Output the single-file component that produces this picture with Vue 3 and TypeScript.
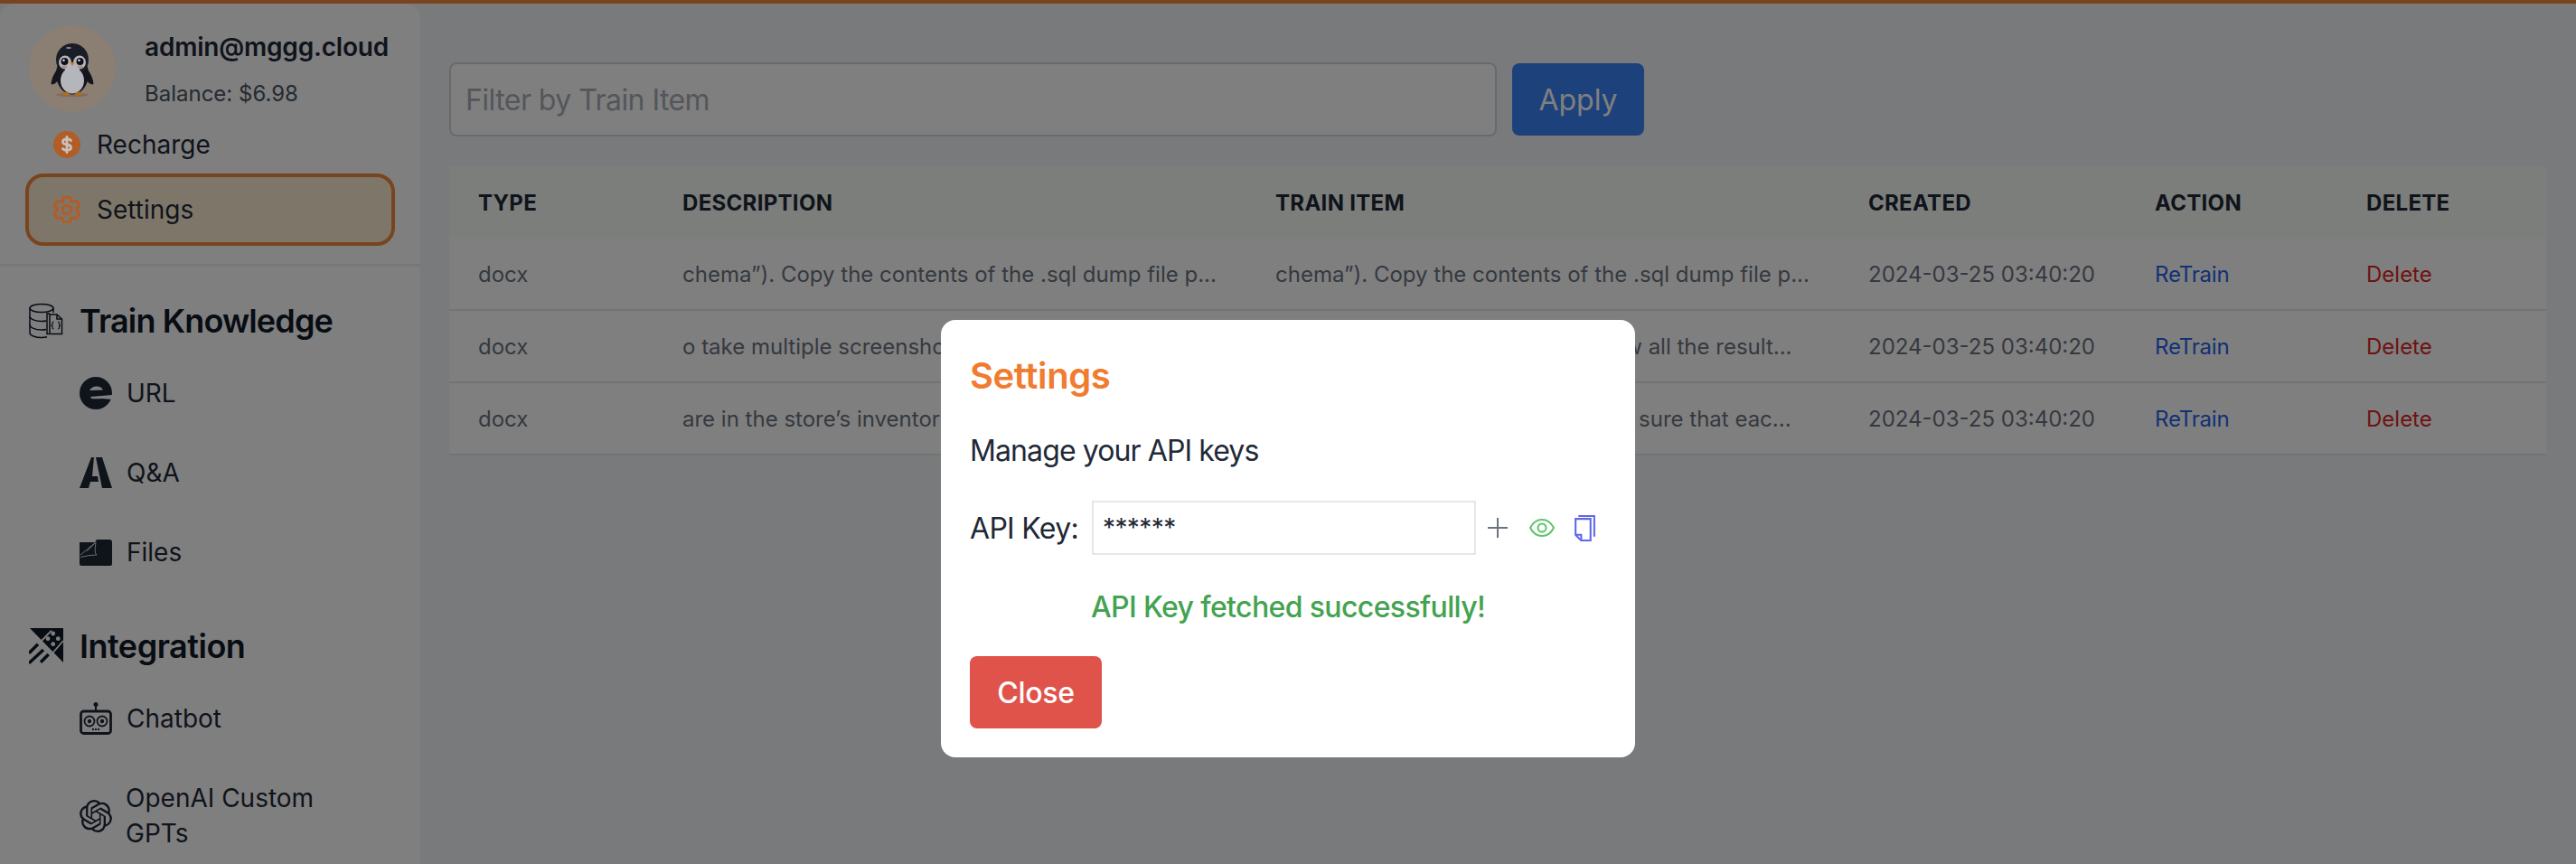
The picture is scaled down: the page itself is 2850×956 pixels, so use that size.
<script setup lang="ts">
interface TrainRow {
  type: string
  description: string
  trainItem: string
  created: string
}

const navTrain = ['URL', 'Q&A', 'Files']

const rows: TrainRow[] = [
  {
    type: 'docx',
    description: 'chema”). Copy the contents of the .sql dump file p...',
    trainItem: 'chema”). Copy the contents of the .sql dump file p...',
    created: '2024-03-25 03:40:20',
  },
  {
    type: 'docx',
    description: 'o take multiple screenshots, to view all the result...',
    trainItem: 'o take multiple screenshots, to view all the result...',
    created: '2024-03-25 03:40:20',
  },
  {
    type: 'docx',
    description: 'are in the store’s inventory to make sure that eac...',
    trainItem: 'are in the store’s inventory to make sure that eac...',
    created: '2024-03-25 03:40:20',
  },
]
</script>

<template>
  <div class="app">
    <div class="top-bar"></div>
    <div class="content">
      <aside class="sidebar">
        <div class="user">
          <svg class="avatar lifted" viewBox="0 0 96 96">
            <circle cx="48" cy="48" r="48" fill="#8b7f73" />
            <ellipse cx="48" cy="77" rx="18" ry="2" fill="#86695c" />
            <path d="M31 49 Q25 57 24.500 65 Q28 67 33 60Z" fill="#14161d" />
            <path d="M65 49 Q71 57 71.500 65 Q68 67 63 60Z" fill="#14161d" />
            <ellipse cx="48" cy="54" rx="18" ry="22.500" fill="#14161d" />
            <ellipse cx="48" cy="38" rx="18" ry="18" fill="#1a1d26" />
            <ellipse cx="48" cy="61" rx="13" ry="14.500" fill="#b5b6bc" />
            <ellipse cx="40" cy="41" rx="7" ry="7.500" fill="#b5b6bc" />
            <ellipse cx="56" cy="41" rx="7" ry="7.500" fill="#b5b6bc" />
            <rect x="40" y="42" width="16" height="10" fill="#b5b6bc" />
            <circle cx="39.500" cy="40" r="4" fill="#0e1016" />
            <circle cx="56.500" cy="40" r="4" fill="#0e1016" />
            <circle cx="38.500" cy="38.800" r="1.300" fill="#d8d8da" />
            <circle cx="55.500" cy="38.800" r="1.300" fill="#d8d8da" />
            <path d="M45 41 H51 L48 45Z" fill="#c7812f" />
            <ellipse cx="39" cy="46" rx="3" ry="1.800" fill="#b08d86" />
            <ellipse cx="57" cy="46" rx="3" ry="1.800" fill="#b08d86" />
            <ellipse cx="41" cy="75.500" rx="4" ry="2" fill="#a96f1e" />
            <ellipse cx="55" cy="75.500" rx="4" ry="2" fill="#a96f1e" />
            <ellipse cx="44" cy="25" rx="3" ry="1" fill="#8a8d95" />
          </svg>
          <div class="user-text">
            <div class="email">admin@mggg.cloud</div>
            <div class="balance">Balance: $6.98</div>
          </div>
        </div>

        <div class="account-link recharge">
          <svg class="account-icon lifted" viewBox="0 0 30 30">
            <circle cx="15" cy="15" r="15" fill="#b25c26" />
            <path
              d="M19.500 10.500 Q18.500 8.800 15 8.800 Q10.500 8.800 10.500 11.800 Q10.500 14.500 15 15 Q19.500 15.500 19.500 18.200 Q19.500 21.200 15 21.200 Q11.500 21.200 10.500 19.500 M15 6.300 V23.700"
              fill="none"
              stroke="#c9c2bb"
              stroke-width="2.800"
              stroke-linecap="round"
            />
          </svg>
          <span>Recharge</span>
        </div>

        <div class="account-link active">
          <svg class="account-icon lifted" viewBox="2.500 2.500 19 19" fill="none" stroke="#b25c26" stroke-width="1.900">
            <path
              stroke-linecap="round"
              stroke-linejoin="round"
              d="M9.594 3.94c.09-.542.56-.94 1.11-.94h2.593c.55 0 1.02.398 1.11.94l.213 1.281c.063.374.313.686.645.87.074.04.147.083.22.127.325.196.72.257 1.075.124l1.217-.456a1.125 1.125 0 0 1 1.37.49l1.296 2.247a1.125 1.125 0 0 1-.26 1.431l-1.003.827c-.293.241-.438.613-.43.992a7.723 7.723 0 0 1 0 .255c-.008.378.137.75.43.991l1.004.827c.424.35.534.955.26 1.43l-1.298 2.247a1.125 1.125 0 0 1-1.369.491l-1.217-.456c-.355-.133-.75-.072-1.076.124a6.47 6.47 0 0 1-.22.128c-.331.183-.581.495-.644.869l-.213 1.281c-.09.543-.56.94-1.11.94h-2.594c-.55 0-1.019-.398-1.11-.94l-.213-1.281c-.062-.374-.312-.686-.644-.87a6.52 6.52 0 0 1-.22-.127c-.325-.196-.72-.257-1.076-.124l-1.217.456a1.125 1.125 0 0 1-1.369-.49l-1.297-2.247a1.125 1.125 0 0 1 .26-1.431l1.004-.827c.292-.24.437-.613.43-.991a6.932 6.932 0 0 1 0-.255c.007-.38-.138-.751-.43-.992l-1.004-.827a1.125 1.125 0 0 1-.26-1.43l1.297-2.247a1.125 1.125 0 0 1 1.37-.491l1.216.456c.356.133.751.072 1.076-.124.072-.044.146-.086.22-.128.332-.183.582-.495.644-.869l.214-1.28Z"
            />
            <path stroke-linecap="round" stroke-linejoin="round" d="M15 12a3 3 0 1 1-6 0 3 3 0 0 1 6 0Z" />
          </svg>
          <span>Settings</span>
        </div>

        <div class="divider"></div>

        <div class="section-title train-title">
          <svg class="section-icon" viewBox="0 0 38 40" fill="none" stroke="#111827" stroke-width="1.500">
            <ellipse cx="14" cy="6" rx="13" ry="4.500" />
            <path d="M1 6 V33.500 C1 36 7 38.500 14 38.500 C16.500 38.500 18.500 38.200 20 37.800" />
            <path d="M27 6 V11" />
            <path d="M1 15 C1 18 7 20.500 14 20.500 C16 20.500 18 20.300 19 20" />
            <path d="M1 24.500 C1 27.500 7 30 14 30 C16 30 18 29.800 19 29.500" />
            <path d="M23 12 H20 V34.500 H22" />
            <path d="M23 13 H31 L36.500 18 V34.500 H23Z" fill="#fff" />
            <path d="M31 13 V18 H36.500" />
            <path d="M27.500 21 Q26 21 26 22.500 V24 L25 25 L26 26 V27.500 Q26 29 27.500 29 M32 21 Q33.500 21 33.500 22.500 V24 L34.500 25 L33.500 26 V27.500 Q33.500 29 32 29" stroke-width="1.100" />
          </svg>
          <span class="train-label">Train Knowledge</span>
        </div>

        <div v-for="item in navTrain" :key="item" class="nav-item">
          <svg v-if="item === 'URL'" class="nav-icon" viewBox="0 0 36 36">
            <circle cx="18" cy="18" r="18" fill="#1f2937" />
            <path d="M11 15 Q13.500 10.500 19 10.500 Q24 10.500 26 14.500 Z" fill="#fff" />
            <path d="M12 22 L36 20 V25 L25 24 Q19 24.500 13 24 Z" fill="#fff" />
          </svg>
          <svg v-else-if="item === 'Q&A'" class="nav-icon" viewBox="0 0 36 36">
            <path d="M0 35 L13 1 H16 L14 22 H20 L21 28 H12 L10 35 Z" fill="#1f2937" />
            <path d="M18 1 H25 L36 35 H25 Z" fill="#1f2937" />
          </svg>
          <svg v-else class="nav-icon" viewBox="0 0 36 36">
            <path d="M0 7 H17 L19 4 H33 Q36 4 36 7 V31 Q36 33 33 33 H3 Q0 33 0 31 Z" fill="#1f2937" />
            <path d="M1 21 L18 7 Q16 20 19 21 Q10 21 1 23.500 M8 17 L17 8" fill="none" stroke="#fff" stroke-width="0.800" />
          </svg>
          <span>{{ item }}</span>
        </div>

        <div class="section-title integration-title">
          <svg class="section-icon" viewBox="0 0 38 40">
            <path d="M1 0 H38 V38 Z" fill="#111827" />
            <path d="M12 16 L25 2.700 M25 29 L38 14" stroke="#fff" stroke-width="1.800" />
            <circle cx="26.700" cy="6" r="2.400" fill="#fff" />
            <circle cx="21" cy="11.700" r="2.400" fill="#fff" />
            <circle cx="32.300" cy="11.700" r="2.400" fill="#fff" />
            <circle cx="26.700" cy="17.700" r="2.400" fill="#fff" />
            <path d="M0 27.700 L10 17.700 M0 38.700 L16 24 M13 37.700 L21.700 29" stroke="#111827" stroke-width="3.400" />
          </svg>
          <span class="integration-label">Integration</span>
        </div>

        <div class="nav-item">
          <svg class="nav-icon" viewBox="0 0 36 36" fill="none" stroke="#1f2937">
            <circle cx="18" cy="2.500" r="2.500" fill="#1f2937" stroke="none" />
            <path d="M18 4 V10" stroke-width="2" />
            <rect x="1.500" y="10" width="33" height="24.500" rx="3" stroke-width="2.800" />
            <circle cx="11" cy="21" r="5.500" stroke-width="1.800" />
            <circle cx="25" cy="21" r="5.500" stroke-width="1.800" />
            <circle cx="11" cy="21" r="2.200" fill="#1f2937" stroke="none" />
            <circle cx="25" cy="21" r="2.200" fill="#1f2937" stroke="none" />
            <path d="M14 30 H22" stroke-width="2" stroke-dasharray="2 1" />
          </svg>
          <span>Chatbot</span>
        </div>

        <div class="nav-item gpt-item">
          <svg class="nav-icon" viewBox="0 0 24 24" fill="#1f2937">
            <path d="M22.2819 9.8211a5.9847 5.9847 0 0 0-.5157-4.9108 6.0462 6.0462 0 0 0-6.5098-2.9A6.0651 6.0651 0 0 0 4.9807 4.1818a5.9847 5.9847 0 0 0-3.9977 2.9 6.0462 6.0462 0 0 0 .7427 7.0966 5.98 5.98 0 0 0 .511 4.9107 6.051 6.051 0 0 0 6.5146 2.9001A5.9847 5.9847 0 0 0 13.2599 24a6.0557 6.0557 0 0 0 5.7718-4.2058 5.9894 5.9894 0 0 0 3.9977-2.9001 6.0557 6.0557 0 0 0-.7475-7.0729zm-9.022 12.6081a4.4755 4.4755 0 0 1-2.8764-1.0408l.1419-.0804 4.7783-2.7582a.7948.7948 0 0 0 .3927-.6813v-6.7369l2.02 1.1686a.071.071 0 0 1 .038.052v5.5826a4.504 4.504 0 0 1-4.4945 4.4944zm-9.6607-4.1254a4.4708 4.4708 0 0 1-.5346-3.0137l.142.0852 4.783 2.7582a.7712.7712 0 0 0 .7806 0l5.8428-3.3685v2.3324a.0804.0804 0 0 1-.0332.0615L9.74 19.9502a4.4992 4.4992 0 0 1-6.1408-1.6464zM2.3408 7.8956a4.485 4.485 0 0 1 2.3655-1.9728V11.6a.7664.7664 0 0 0 .3879.6765l5.8144 3.3543-2.0201 1.1685a.0757.0757 0 0 1-.071 0l-4.8303-2.7865A4.504 4.504 0 0 1 2.3408 7.872zm16.5963 3.8558L13.1038 8.364 15.1192 7.2a.0757.0757 0 0 1 .071 0l4.8303 2.7913a4.4944 4.4944 0 0 1-.6765 8.1042v-5.6772a.79.79 0 0 0-.407-.667zm2.0107-3.0231l-.142-.0852-4.7735-2.7818a.7759.7759 0 0 0-.7854 0L9.409 9.2297V6.8974a.0662.0662 0 0 1 .0284-.0615l4.8303-2.7866a4.4992 4.4992 0 0 1 6.6802 4.66zM8.3065 12.863l-2.02-1.1638a.0804.0804 0 0 1-.038-.0567V6.0742a4.4992 4.4992 0 0 1 7.3757-3.4537l-.142.0805L8.704 5.459a.7948.7948 0 0 0-.3927.6813zm1.0976-2.3654l2.602-1.4998 2.6069 1.4998v2.9994l-2.5974 1.4997-2.6067-1.4997Z" />
          </svg>
          <span>OpenAI Custom GPTs</span>
        </div>
      </aside>

      <main class="main">
        <div class="filter">
          <input class="filter-input" type="text" placeholder="Filter by Train Item" />
          <button class="apply-btn">Apply</button>
        </div>

        <table class="train-table">
          <colgroup>
            <col class="col-type" />
            <col class="col-text" />
            <col class="col-text" />
            <col class="col-created" />
            <col class="col-action" />
            <col />
          </colgroup>
          <thead>
            <tr>
              <th>Type</th>
              <th>Description</th>
              <th>Train Item</th>
              <th>Created</th>
              <th>Action</th>
              <th>Delete</th>
            </tr>
          </thead>
          <tbody>
            <tr v-for="(row, i) in rows" :key="i">
              <td>{{ row.type }}</td>
              <td>{{ row.description }}</td>
              <td>{{ row.trainItem }}</td>
              <td>{{ row.created }}</td>
              <td><a class="retrain">ReTrain</a></td>
              <td><a class="delete">Delete</a></td>
            </tr>
          </tbody>
        </table>
      </main>
    </div>

    <div class="overlay">
      <div class="modal">
        <h3 class="modal-title">Settings</h3>
        <p class="modal-sub">Manage your API keys</p>
        <div class="key-row">
          <label class="key-label">API Key:</label>
          <div class="key-input">******</div>
          <svg class="key-plus" viewBox="0 0 24 24" fill="none" stroke="#6b7280" stroke-width="2">
            <path d="M12 1V23M1 12H23" />
          </svg>
          <svg class="key-eye" viewBox="0 0 28 20" fill="none" stroke="#5cc46c" stroke-width="2">
            <path d="M1 10 C4 4 9 1 14 1 C19 1 24 4 27 10 C24 16 19 19 14 19 C9 19 4 16 1 10Z" />
            <circle cx="14" cy="10" r="4.500" />
          </svg>
          <svg class="key-copy" viewBox="0 0 22 28" fill="none" stroke="#5f67e8" stroke-width="2">
            <path d="M4 1 H21 V23" />
            <path d="M1 4 H17 V27 H7 L1 21Z" />
            <path d="M1 21 H7 V27" />
          </svg>
        </div>
        <p class="key-message">API Key fetched successfully!</p>
        <button class="close-btn">Close</button>
      </div>
    </div>
  </div>
</template>

<style>
html,
body {
  margin: 0;
  background: #f3f4f6;
}
</style>

<style scoped>
.app {
  position: relative;
  display: flex;
  flex-direction: column;
  width: 2850px;
  height: 956px;
  overflow: hidden;
  background: #f3f4f6;
  font-family: Inter, 'Liberation Sans', sans-serif;
  color: #1f2937;
}

.top-bar {
  flex: none;
  height: 4px;
  background: #f28a3c;
}

.content {
  flex: 1;
  min-height: 0;
  display: flex;
}

.sidebar {
  flex: 0 0 465px;
  box-sizing: border-box;
  padding: 24px 0 0;
  background: #fff;
  border-radius: 16px 16px 0 0;
}

.lifted {
  position: relative;
  z-index: 60;
}

.user {
  display: flex;
  align-items: flex-start;
  gap: 32px;
  padding-left: 32px;
}

.avatar {
  width: 96px;
  height: 96px;
  flex: none;
}

.email {
  margin-top: 4px;
  font-size: 28px;
  line-height: 40px;
  font-weight: 600;
  letter-spacing: -0.2px;
}

.balance {
  margin-top: 16px;
  font-size: 24px;
  line-height: 32px;
  color: #4b5563;
}

.account-link {
  display: flex;
  align-items: center;
  gap: 18px;
  box-sizing: border-box;
  width: 409px;
  height: 80px;
  margin-left: 28px;
  padding-left: 27px;
  font-size: 28px;
  border-radius: 20px;
  border: 4px solid transparent;
}

.account-link.recharge {
  height: 64px;
  margin-top: 4px;
}

.account-link.active {
  background: #ffedd5;
  border-color: #f28a3c;
}

.account-icon {
  width: 30px;
  height: 30px;
  flex: none;
}

.divider {
  height: 3px;
  margin-top: 20px;
  background: #f0f0f0;
}

.section-title {
  display: flex;
  align-items: center;
  gap: 18px;
  height: 40px;
  padding-left: 32px;
  font-size: 36px;
  font-weight: 600;
  color: #111827;
}

.train-title {
  margin: 40px 0 16px;
}

.train-label {
  letter-spacing: -0.85px;
}

.integration-title {
  margin: 40px 0 16px;
}

.integration-label {
  letter-spacing: -0.5px;
}

.section-icon {
  width: 38px;
  height: 40px;
  flex: none;
}

.nav-item {
  display: flex;
  align-items: center;
  gap: 16px;
  height: 88px;
  padding-left: 88px;
  font-size: 28px;
}

.nav-icon {
  width: 36px;
  height: 36px;
  flex: none;
}

.gpt-item {
  height: 128px;
  gap: 15px;
  padding-right: 90px;
  line-height: 39px;
}

.main {
  flex: 1;
  min-width: 0;
  box-sizing: border-box;
  padding: 65px 32px 0;
}

.filter {
  display: flex;
  align-items: center;
  gap: 17px;
  height: 82px;
}

.filter-input {
  width: 1159px;
  height: 82px;
  box-sizing: border-box;
  padding: 0 16px;
  background: #fff;
  border: 2px solid #d1d5db;
  border-radius: 8px;
  font-family: inherit;
  font-size: 32px;
  letter-spacing: -0.55px;
  outline: none;
}

.filter-input::placeholder {
  color: #a8adb5;
}

.apply-btn {
  width: 146px;
  height: 80px;
  padding: 0;
  background: #3b82f6;
  border: none;
  border-radius: 8px;
  color: #fff;
  font-family: inherit;
  font-size: 32px;
}

.train-table {
  width: 2320px;
  margin-top: 33px;
  table-layout: fixed;
  border-collapse: collapse;
  background: #fff;
  font-size: 24px;
}

.col-type {
  width: 226px;
}

.col-text {
  width: 656px;
}

.col-created {
  width: 317px;
}

.col-action {
  width: 234px;
}

.train-table th {
  height: 80px;
  padding: 0 32px;
  background: #f9fcf9;
  text-align: left;
  font-weight: 700;
  letter-spacing: 0.3px;
  text-transform: uppercase;
  color: #1f2937;
  white-space: nowrap;
}

.train-table td {
  height: 78px;
  padding: 0 32px;
  color: #6b7280;
  border-bottom: 2px solid #e5e7eb;
  white-space: nowrap;
  overflow: hidden;
}

.retrain {
  color: #2563eb;
  letter-spacing: -0.2px;
}

.delete {
  color: #dc2626;
}

.overlay {
  position: absolute;
  inset: 0;
  z-index: 50;
  display: flex;
  justify-content: center;
  align-items: flex-start;
  padding-top: 354px;
  background: rgba(0, 0, 0, 0.5);
}

.modal {
  width: 768px;
  height: 484px;
  box-sizing: border-box;
  padding: 32px;
  background: #fff;
  border-radius: 16px;
}

.modal-title {
  margin: 0;
  font-size: 40px;
  line-height: 60px;
  font-weight: 600;
  letter-spacing: -0.4px;
  color: #f07c30;
}

.modal-sub {
  margin: 31px 0 0;
  font-size: 32px;
  line-height: 44px;
  letter-spacing: -0.9px;
  color: #1f2937;
}

.key-row {
  display: flex;
  align-items: center;
  margin-top: 33px;
  height: 60px;
}

.key-label {
  width: 135px;
  font-size: 32px;
  letter-spacing: -0.7px;
}

.key-input {
  box-sizing: border-box;
  width: 425px;
  height: 60px;
  padding: 10px 10px 0;
  border: 2px solid #e5e7eb;
  font-size: 28px;
  line-height: 36px;
  letter-spacing: -0.6px;
}

.key-plus {
  width: 24px;
  height: 24px;
  margin-left: 12px;
}

.key-eye {
  width: 28px;
  height: 20px;
  margin-left: 23px;
}

.key-copy {
  width: 23px;
  height: 29px;
  margin-left: 22px;
}

.key-message {
  margin: 36px 0 0 134px;
  font-size: 32px;
  line-height: 44px;
  font-weight: 500;
  letter-spacing: -0.63px;
  color: #43a350;
}

.close-btn {
  display: block;
  width: 146px;
  height: 80px;
  margin-top: 32px;
  padding: 0;
  background: #e0534b;
  border: none;
  border-radius: 8px;
  color: #fff;
  font-family: inherit;
  font-size: 32px;
  font-weight: 500;
  letter-spacing: -0.3px;
}
</style>
